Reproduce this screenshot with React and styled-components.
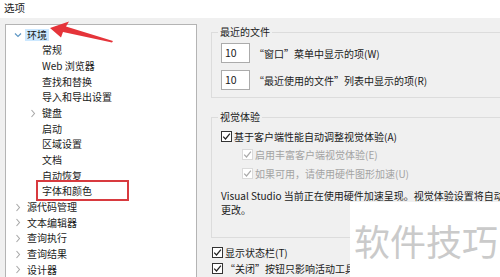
import React from 'react';
import styled, { createGlobalStyle } from 'styled-components';

const Global = createGlobalStyle`
  html, body { margin: 0; padding: 0; width: 500px; height: 277px; overflow: hidden; background: #f0f0f0; }
  body { font-family: "Noto Sans CJK SC", "Noto Sans", sans-serif; font-size: 10px; color: #1a1a1a; }
  * { box-sizing: border-box; }
`;

const Window = styled.div`
  position: relative;
  width: 500px;
  height: 277px;
  overflow: hidden;
  background: #f0f0f0;
  display: flex;
  flex-direction: column;
`;

const TitleBar = styled.div`
  flex: none;
  height: 18px;
  background: #fff;
  padding-left: 4px;
  font-size: 10.5px;
  line-height: 16px;
`;

const Main = styled.div`
  flex: 1;
  min-height: 0;
  display: flex;
  padding-left: 5px;
`;

const TreePanel = styled.div`
  flex: none;
  width: 192px;
  margin-top: 6px;
  background: #fff;
  border: 1px solid #b4b4b4;
  border-bottom: none;
  padding-top: 2px;
`;

const TreeRow = styled.div`
  height: 15.67px;
  display: flex;
  align-items: center;
  padding-left: ${p => 5 + p.$level * 15}px;
  white-space: nowrap;
`;

const Expander = styled.span`
  flex: none;
  width: 14px;
  height: 12px;
  display: flex;
  align-items: center;
  justify-content: center;
`;

const NodeLabel = styled.span`
  padding: 0 2px;
  line-height: 12px;
  background: ${p => (p.$selected ? '#cce8ff' : 'transparent')};
`;

const RightColumn = styled.div`
  flex: none;
  width: 330px;
  margin-left: 14px;
  display: flex;
  flex-direction: column;
`;

const Group = styled.fieldset`
  margin: ${p => p.$top}px 0 0 0;
  padding: ${p => p.$padTop}px 8px ${p => p.$padBottom}px 9px;
  border: 1px solid #dcdcdc;
  min-width: 0;
`;

const Legend = styled.legend`
  padding: 0 2px;
  margin-left: -3px;
  line-height: 12px;
  font-size: 10px;
`;

const InputList = styled.div`
  display: flex;
  flex-direction: column;
  gap: 7px;
`;

const InputRow = styled.div`
  display: flex;
  align-items: center;
  gap: 4px;
  white-space: nowrap;
`;

const NumberBox = styled.div`
  flex: none;
  width: 29px;
  height: 20px;
  background: #fff;
  border: 1px solid #ababab;
  padding-left: 3px;
  font-size: 10.5px;
  line-height: 18px;
`;

const CheckRow = styled.div`
  height: ${p => p.$h}px;
  display: flex;
  align-items: center;
  gap: 2px;
  padding-left: ${p => p.$indent}px;
  white-space: nowrap;
  color: ${p => (p.$disabled ? '#a3a3a3' : '#1a1a1a')};
`;

const Box = styled.span`
  flex: none;
  width: 11px;
  height: 11px;
  border: 1px solid ${p => (p.$disabled ? '#dadada' : '#333')};
  background: #fff;
  display: flex;
  align-items: center;
  justify-content: center;
`;

const Note = styled.div`
  margin-top: 6.5px;
  line-height: 14px;
  white-space: nowrap;
`;

const Below = styled.div`
  margin-top: 6px;
  display: flex;
  flex-direction: column;
`;

const Watermark = styled.div`
  position: absolute;
  left: 350px;
  top: 202px;
  right: 0;
  bottom: 0;
  background: #fff;
  padding: 18px 0 0 4px;
  font-size: 36px;
  line-height: 40px;
  color: #cacaca;
  white-space: nowrap;
  letter-spacing: 0px;
`;

const RedFrame = styled.div`
  position: absolute;
  left: 36px;
  top: 180px;
  width: 93px;
  height: 21px;
  border: 2px solid #d83a3f;
`;

const ArrowLayer = styled.svg`
  position: absolute;
  left: 0;
  top: 0;
  pointer-events: none;
`;

const Chevron = ({ open }) =>
  open ? (
    <svg width="8" height="6" viewBox="0 0 8 6">
      <path d="M1 1.5 L4 4.5 L7 1.5" fill="none" stroke="#5f97c4" strokeWidth="1.2" />
    </svg>
  ) : (
    <svg width="6" height="9" viewBox="0 0 6 9">
      <path d="M1.5 1 L4.5 4.5 L1.5 8" fill="none" stroke="#a8a8a8" strokeWidth="1.1" />
    </svg>
  );

const Check = ({ disabled }) => (
  <Box $disabled={disabled}>
    <svg width="9" height="9" viewBox="0 0 9 9">
      <path d="M1.2 4.6 L3.5 7 L7.9 1.6" fill="none" stroke={disabled ? '#aaaaaa' : '#222'} strokeWidth="1.2" />
    </svg>
  </Box>
);

const tree = [
  { label: '环境', level: 0, exp: 'open', selected: true },
  { label: '常规', level: 1 },
  { label: 'Web 浏览器', level: 1 },
  { label: '查找和替换', level: 1 },
  { label: '导入和导出设置', level: 1 },
  { label: '键盘', level: 1, exp: 'closed' },
  { label: '启动', level: 1 },
  { label: '区域设置', level: 1 },
  { label: '文档', level: 1 },
  { label: '自动恢复', level: 1 },
  { label: '字体和颜色', level: 1 },
  { label: '源代码管理', level: 0, exp: 'closed' },
  { label: '文本编辑器', level: 0, exp: 'closed' },
  { label: '查询执行', level: 0, exp: 'closed' },
  { label: '查询结果', level: 0, exp: 'closed' },
  { label: '设计器', level: 0, exp: 'closed' },
];

export default function App() {
  return (
    <Window>
      <Global />
      <TitleBar>选项</TitleBar>
      <Main>
        <TreePanel>
          {tree.map(n => (
            <TreeRow key={n.label} $level={n.level}>
              <Expander>{n.exp ? <Chevron open={n.exp === 'open'} /> : null}</Expander>
              <NodeLabel $selected={n.selected}>{n.label}</NodeLabel>
            </TreeRow>
          ))}
        </TreePanel>
        <RightColumn>
          <Group $top={8} $padTop={5} $padBottom={7}>
            <Legend>最近的文件</Legend>
            <InputList>
              <InputRow>
                <NumberBox>10</NumberBox>
                <span>“窗口”菜单中显示的项(W)</span>
              </InputRow>
              <InputRow>
                <NumberBox>10</NumberBox>
                <span>“最近使用的文件”列表中显示的项(R)</span>
              </InputRow>
            </InputList>
          </Group>
          <Group $top={13} $padTop={4} $padBottom={20}>
            <Legend>视觉体验</Legend>
            <CheckRow $h={18.5} $indent={0}>
              <Check />
              <span>基于客户端性能自动调整视觉体验(A)</span>
            </CheckRow>
            <CheckRow $h={18.5} $indent={21} $disabled>
              <Check disabled />
              <span>启用丰富客户端视觉体验(E)</span>
            </CheckRow>
            <CheckRow $h={18.5} $indent={21} $disabled>
              <Check disabled />
              <span>如果可用，请使用硬件图形加速(U)</span>
            </CheckRow>
            <Note>
              <div>Visual Studio 当前正在使用硬件加速呈现。视觉体验设置将自动基于客户端性能</div>
              <div>更改。</div>
            </Note>
          </Group>
          <Below>
            <CheckRow $h={16} $indent={1}>
              <Check />
              <span>显示状态栏(T)</span>
            </CheckRow>
            <CheckRow $h={16} $indent={1}>
              <Check />
              <span>“关闭”按钮只影响活动工具窗口</span>
            </CheckRow>
          </Below>
        </RightColumn>
      </Main>
      <RedFrame />
      <ArrowLayer width="500" height="277" viewBox="0 0 500 277">
        <polygon points="50,28 69,21.5 66,26.5 113,41 112,42.5 63,32 61,37.5" fill="#e5343a" />
      </ArrowLayer>
      <Watermark>软件技巧</Watermark>
    </Window>
  );
}
